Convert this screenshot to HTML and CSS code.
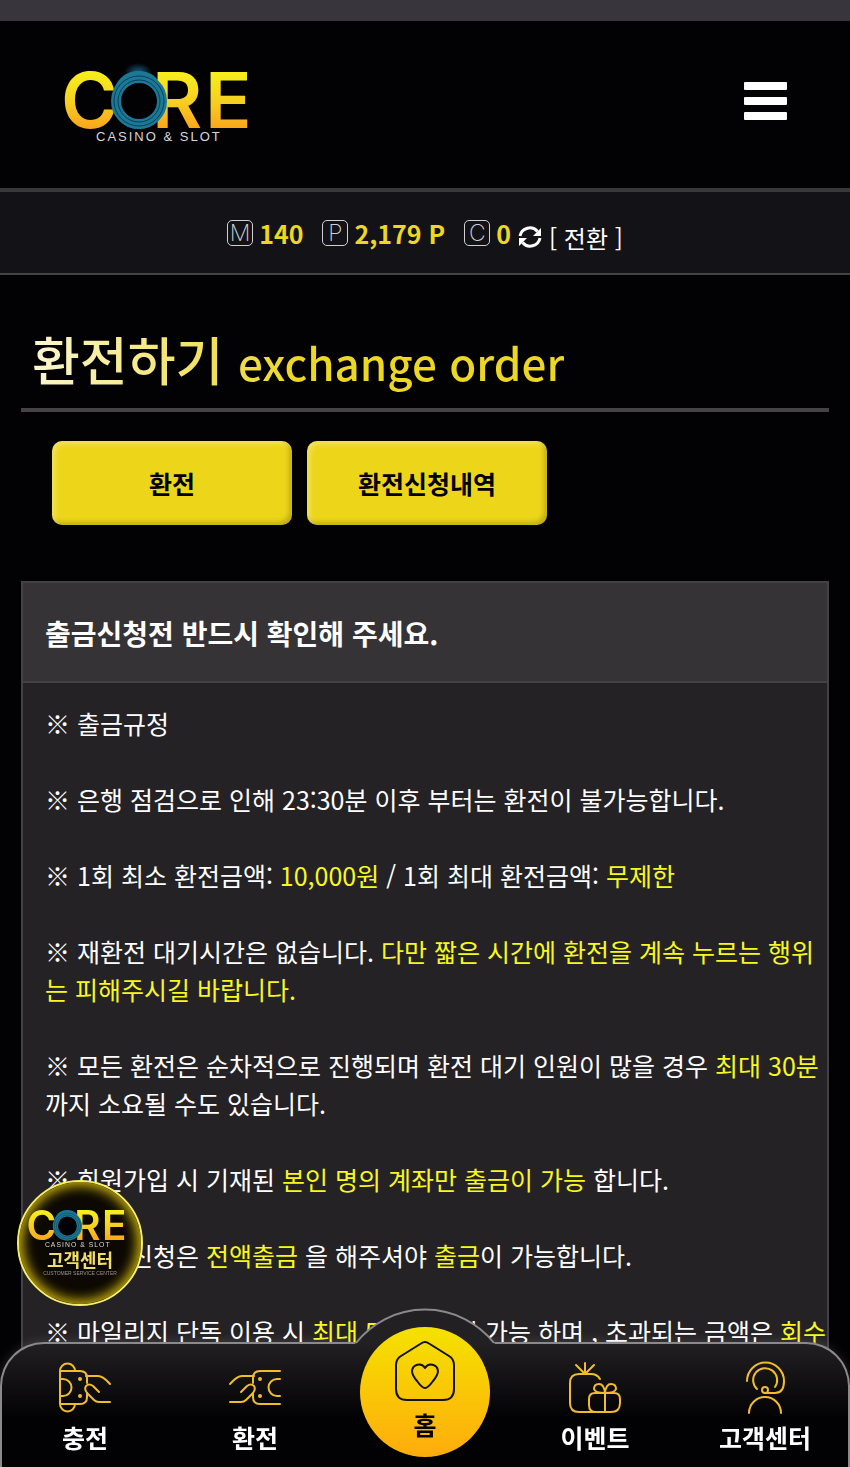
FILE: index.html
```html
<!DOCTYPE html>
<html lang="ko">

<head>
    <meta charset="UTF-8">
    <meta name="viewport" content="width=device-width, initial-scale=1.0">
    <title>CORE - 환전하기</title>
    <link rel="stylesheet" href="styles.css">
</head>

<body>
    <header class="header">
        <a class="logo" href="#" aria-label="CORE CASINO &amp; SLOT">
            <svg width="200" height="84" viewBox="0 0 200 84">
                <defs>
                    <linearGradient id="gold" x1="0" y1="14" x2="0" y2="72" gradientUnits="userSpaceOnUse">
                        <stop offset="0" stop-color="#f7ee1c" />
                        <stop offset="0.5" stop-color="#f6cf20" />
                        <stop offset="1" stop-color="#fba21a" />
                    </linearGradient>
                    <radialGradient id="flare">
                        <stop offset="0" stop-color="#1f86ad" stop-opacity="0.7" />
                        <stop offset="1" stop-color="#1f86ad" stop-opacity="0" />
                    </radialGradient>
                </defs>
                <ellipse cx="75" cy="13" rx="14" ry="9" fill="url(#flare)" />
                <g id="mark">
                    <text class="mark-text" y="69" fill="url(#gold)"><tspan x="-2">C</tspan><tspan x="46" fill="#1b7896">O</tspan><tspan x="89">R</tspan><tspan x="142">E</tspan></text>
                    <circle cx="76" cy="42" r="23" fill="#020104" stroke="#1b7896" stroke-width="10" />
                    <circle cx="76" cy="42" r="25" fill="none" stroke="#0a3f56" stroke-width="1" />
                    <circle cx="76" cy="42" r="21" fill="none" stroke="#0a3f56" stroke-width="1" />
                </g>
                <text class="mark-sub" x="33" y="82">CASINO &amp; SLOT</text>
            </svg>
        </a>
        <button class="menu-btn" type="button" aria-label="메뉴">
            <span></span>
            <span></span>
            <span></span>
        </button>
    </header>

    <div class="balance">
        <span class="balance-item"><i>M</i><b>140</b></span>
        <span class="balance-item"><i>P</i><b>2,179 P</b></span>
        <span class="balance-item"><i>C</i><b>0</b></span>
        <button class="convert-btn" type="button">
            <svg width="24" height="24" viewBox="0 0 24 24" fill="none" stroke="#fff" stroke-width="3">
                <path d="M2 11A10 10 0 0 1 19.500 6.500" />
                <path d="M22 13A10 10 0 0 1 4.500 17.500" />
                <path d="M23 3v8h-8zM1 21v-8h8z" fill="#fff" stroke="none" />
            </svg>
            [ 전환 ]
        </button>
    </div>

    <main class="content">
        <h1 class="title"><span>환전하기 <small>exchange order</small></span></h1>

        <div class="tabs">
            <button class="tab" type="button">환전</button>
            <button class="tab" type="button">환전신청내역</button>
        </div>

        <section class="notice">
            <h2>출금신청전 반드시 확인해 주세요.</h2>
            <div class="notice-body">
                <p>※ 출금규정</p>
                <p>※ 은행 점검으로 인해 23:30분 이후 부터는 환전이 불가능합니다.</p>
                <p>※ 1회 최소 환전금액: <em>10,000원</em> / 1회 최대 환전금액: <em>무제한</em></p>
                <p>※ 재환전 대기시간은 없습니다. <em>다만 짧은 시간에 환전을 계속 누르는 행위는 피해주시길 바랍니다.</em></p>
                <p>※ 모든 환전은 순차적으로 진행되며 환전 대기 인원이 많을 경우 <em>최대 30분</em>까지 소요될 수도 있습니다.</p>
                <p>※ 회원가입 시 기재된 <em>본인 명의 계좌만 출금이 가능</em> 합니다.</p>
                <p>※ 출금 신청은 <em>전액출금</em> 을 해주셔야 <em>출금</em>이 가능합니다.</p>
                <p>※ 마일리지 단독 이용 시 <em>최대 5만 원</em>까지 가능 하며 , 초과되는 금액은 <em>회수</em></p>
            </div>
        </section>
    </main>

    <a class="support" href="#">
        <svg width="106" height="44" viewBox="0 0 200 84" aria-hidden="true">
            <use href="#mark" />
            <text class="mark-sub" x="33" y="83">CASINO &amp; SLOT</text>
        </svg>
        <strong>고객센터</strong>
        <small>CUSTOMER SERVICE CENTER</small>
    </a>

    <nav class="bottom-nav">
        <svg class="nav-bump" width="140" height="36" viewBox="0 0 140 36">
            <path d="M0 36L1 34.500A88 88 0 0 1 139 34.500L140 36z" fill="#222023" />
            <path d="M1 35A88 88 0 0 1 139 35" fill="none" stroke="#8b898c" stroke-width="2" />
        </svg>
        <a class="nav-item" href="#">
            <svg width="54" height="54" viewBox="0 0 54 54">
                <path d="M2 10v33M2 10a7.500 7.500 0 0 1 15 0M2 43a7.500 7.500 0 0 0 15 0M2 10h20q7 0 7 7v5M2 43h20q7 0 7-7v-4M2 18h3a8 8 0 0 1 0 17H2" />
                <path d="M28 15h12q5 0 12 8M41 31l-6-6q-4-3-7 0q-2 3 1 7l7 7q2 2 5 2h11" />
                <circle cx="22" cy="18" r="1" />
                <circle cx="22" cy="35" r="1" />
            </svg>
            충전
        </a>
        <a class="nav-item" href="#">
            <svg width="54" height="54" viewBox="0 0 54 54">
                <path d="M52 10H32q-7 0-7 7v5M52 43H32q-7 0-7-7v-4M52 18h-3a8 8 0 0 0 0 17h3" />
                <path d="M26 15H14q-5 0-12 8M13 31l6-6q4-3 7 0q2 3-1 7l-7 7q-2 2-5 2H2" />
                <circle cx="32" cy="18" r="1" />
                <circle cx="32" cy="35" r="1" />
            </svg>
            환전
        </a>
        <a class="nav-item nav-home" href="#">
            <svg width="62" height="62" viewBox="0 0 62 62">
                <path d="M27 3.500q4-3 8 0L55 16q5 3 5 9v24q0 11-11 11H13q-11 0-11-11V25q0-6 5-9z" />
                <path d="M31 48q-3 0-8-7q-5-6-5-10a7 7 0 0 1 13-3a7 7 0 0 1 13 3q0 4-5 10q-5 7-8 7z" />
            </svg>
            홈
        </a>
        <a class="nav-item" href="#">
            <svg width="54" height="54" viewBox="0 0 54 54">
                <path d="M17 13L8 4M17 13V2M17 13l9-9" />
                <path d="M32 18q-3-5-9-5H11q-9 0-9 9v20q0 9 9 9h32q9 0 9-9v-4q0-6-6-6H27q-6 0-6 6v6q0 7 7 7M37 32v19" />
                <path d="M37 32q-10 0-11-4q0-5 5-5t6 9q1-9 6-9t5 5q-1 4-11 4" />
            </svg>
            이벤트
        </a>
        <a class="nav-item" href="#">
            <svg width="54" height="54" viewBox="0 0 54 54">
                <path d="M9 20a18 18 0 0 1 37 0q0 12-9 12H27" />
                <path d="M19 28a12 12 0 1 1 18-2" />
                <circle cx="27" cy="29" r="3" />
                <path d="M11 52a16 16 0 0 1 32 0" />
            </svg>
            고객센터
        </a>
    </nav>
</body>

</html>
```
FILE: styles.css
```css
* {
    margin: 0;
    padding: 0;
    box-sizing: border-box;
    font-family: 'Noto Sans CJK KR', 'Noto Sans', sans-serif;
}

body {
    background-color: #020104;
    border-top: 21px solid #38363c;
    color: #fff;
    display: flex;
    flex-direction: column;
    min-height: 100vh;
    font-size: 25px;
    line-height: 38px;
}

a {
    color: inherit;
    text-decoration: none;
}

button {
    border: none;
    cursor: pointer;
    font-size: 25px;
}

.header {
    display: flex;
    justify-content: space-between;
    align-items: center;
    height: 167px;
    padding: 0 63px 8px;
}

.logo svg,
.support svg {
    display: block;
    overflow: visible;
}

.mark-text,
.mark-text tspan {
    font-family: 'Inter', sans-serif;
    font-size: 77px;
    font-weight: 600;
}

.mark-sub {
    font-family: 'Liberation Sans', sans-serif;
    font-size: 13px;
    letter-spacing: 2px;
    fill: #d8d8d8;
}

.menu-btn {
    display: flex;
    flex-direction: column;
    gap: 7px;
    width: 43px;
    background: none;
}

.menu-btn span {
    height: 8px;
    border-radius: 1px;
    background-color: #fff;
}

.balance {
    display: flex;
    justify-content: center;
    height: 87px;
    padding-top: 22px;
    background-color: #131216;
    border-top: 4px solid #38373a;
    border-bottom: 2px solid #444346;
}

.balance-item {
    display: flex;
    align-items: center;
    gap: 6px;
    height: 38px;
    margin-right: 19px;
}

.balance-item:nth-child(3) {
    margin-right: 7px;
}

.balance-item i {
    width: 26px;
    height: 26px;
    border: 1px solid #d0d0d2;
    border-radius: 5px;
    color: #d0d0d2;
    font-family: 'Inter', sans-serif;
    font-size: 23px;
    font-style: normal;
    font-weight: 200;
    line-height: 24px;
    text-align: center;
}

.balance-item b {
    color: #ecd723;
    font-size: 25px;
}

.convert-btn {
    display: flex;
    align-items: center;
    gap: 7px;
    height: 46px;
    background: none;
    color: #fff;
    font-size: 24px;
}

.content {
    flex: 1;
    display: flex;
    flex-direction: column;
    padding: 45px 21px 0;
}

.title {
    height: 92px;
    padding-left: 11px;
    border-bottom: 4px solid #454346;
    font-size: 52px;
    font-weight: 500;
    line-height: 78px;
}

.title span {
    background: linear-gradient(to right, #fbf6cf, #ecd723 50%);
    background-clip: text;
    -webkit-background-clip: text;
    color: transparent;
}

.title small {
    font-size: 44px;
    font-weight: 500;
}

.tabs {
    display: flex;
    gap: 15px;
    padding: 29px 31px 56px;
}

.tab {
    width: 240px;
    height: 84px;
    border-radius: 10px;
    background-color: #edd61a;
    box-shadow: inset 3px 3px 5px rgba(255, 255, 255, 0.3), inset -3px -3px 5px rgba(0, 0, 0, 0.2);
    color: #000;
    font-weight: 700;
}

.notice {
    flex: 1;
    background-color: #242225;
    border: 2px solid #434145;
    border-bottom: none;
}

.notice h2 {
    height: 100px;
    padding-left: 22px;
    background-color: #363336;
    border-bottom: 2px solid #434145;
    font-size: 28px;
    font-weight: 700;
    line-height: 100px;
}

.notice-body {
    display: flex;
    flex-direction: column;
    gap: 38px;
    padding: 21px 0 0 22px;
}

.notice-body em {
    color: #f8f81c;
    font-style: normal;
}

.support {
    position: fixed;
    left: 17px;
    bottom: 161px;
    display: flex;
    flex-direction: column;
    align-items: center;
    width: 126px;
    height: 126px;
    padding-top: 22px;
    border: 2px solid #f6ee6a;
    border-radius: 50%;
    background-color: #0c0803;
    box-shadow: inset 0 0 12px 4px #c4ac0c;
}

.support strong {
    color: #f0dd6c;
    font-size: 18px;
    line-height: 22px;
}

.support small {
    color: #98948c;
    font-family: 'Liberation Sans', sans-serif;
    font-size: 5px;
    line-height: 6px;
}

/* 2px lower than the window so that the line shows on three sides only */
.bottom-nav {
    position: fixed;
    left: 0;
    right: 0;
    bottom: -2px;
    display: grid;
    grid-template-columns: repeat(5, 1fr);
    height: 127px;
    border-radius: 44px 44px 0 0;
    background: linear-gradient(#222023, #020104 60%);
    box-shadow: inset 0 0 0 2px #8b898c, 0 0 12px rgba(255, 255, 255, 0.15);
}

.nav-bump {
    position: absolute;
    left: 50%;
    bottom: 125px;
    margin-left: -70px;
}

.nav-item {
    display: flex;
    flex-direction: column;
    align-items: center;
    gap: 3px;
    padding-top: 19px;
    font-weight: 700;
}

.nav-item svg {
    fill: none;
    stroke: #f0bc2c;
    stroke-width: 2;
    stroke-linecap: round;
    stroke-linejoin: round;
}

.nav-home {
    position: relative;
    justify-self: center;
    top: -15px;
    width: 130px;
    height: 130px;
    padding-top: 13px;
    border-radius: 50%;
    background: linear-gradient(#f4e200, #ffac0c);
    color: #000;
}

.nav-home svg {
    stroke: #111;
}
```
